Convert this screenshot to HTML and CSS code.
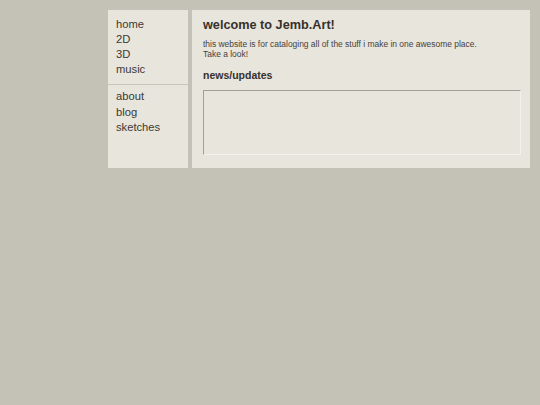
FILE: index.html
```html
<!DOCTYPE html>
<html>
<head>
<meta charset="utf-8">
<title>Jemb.Art</title>
<link rel="stylesheet" href="styles.css">
</head>
<body>
<div class="layout">
  <nav class="sidebar">
    <ul class="nav-group first">
      <li>home</li>
      <li>2D</li>
      <li>3D</li>
      <li>music</li>
    </ul>
    <ul class="nav-group second">
      <li>about</li>
      <li>blog</li>
      <li>sketches</li>
    </ul>
  </nav>
  <main class="main">
    <h1 class="title">welcome to Jemb.Art!</h1>
    <p class="intro">this website is for cataloging all of the stuff i make in one awesome place.<br>Take a look!</p>
    <h2 class="subtitle">news/updates</h2>
    <div class="news-box"></div>
  </main>
</div>
</body>
</html>
```

FILE: styles.css
```css
html, body {
  margin: 0;
  padding: 0;
  background: #c4c1b6;
  font-family: "Liberation Sans", Arial, sans-serif;
  color: #3a3430;
}

.layout {
  display: flex;
  align-items: stretch;
  gap: 4px;
  margin: 10px 0 0 108px;
}

.sidebar {
  width: 80px;
  background: #e8e5dc;
}

.nav-group {
  list-style: none;
  margin: 0;
  padding: 0 8px;
  font-size: 11.2px;
  line-height: 15.25px;
  color: #3d3935;
}

.nav-group.first {
  padding-top: 6.6px;
  padding-bottom: 6.2px;
  border-bottom: 1px solid #c9c5bb;
}

.nav-group.second {
  padding-top: 4.6px;
}

.main {
  width: 318px;
  background: #e8e5dc;
  padding: 8.4px 9px 13px 11px;
}

.title {
  margin: 0;
  font-size: 12.7px;
  line-height: 15px;
  font-weight: bold;
  color: #37302b;
}

.intro {
  margin: 6.8px 0 0;
  font-size: 8.45px;
  line-height: 9.7px;
  color: #47423d;
}

.subtitle {
  margin: 9.3px 0 0;
  font-size: 10.5px;
  line-height: 12px;
  font-weight: bold;
  color: #37302b;
}

.news-box {
  margin-top: 9.1px;
  height: 63px;
  border-style: solid;
  border-width: 1px;
  border-color: #a29f97 #f3f1eb #f3f1eb #a29f97;
  background: #e8e5dc;
}
```
